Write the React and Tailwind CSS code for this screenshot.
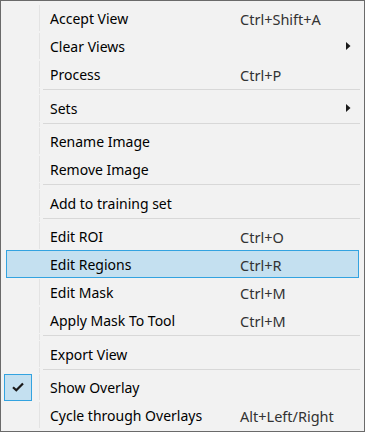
import React from 'react';

const items = [
  { label: 'Accept View', shortcut: 'Ctrl+Shift+A' },
  { label: 'Clear Views', submenu: true },
  { label: 'Process', shortcut: 'Ctrl+P' },
  'sep',
  { label: 'Sets', submenu: true },
  'sep',
  { label: 'Rename Image' },
  { label: 'Remove Image' },
  'sep',
  { label: 'Add to training set' },
  'sep',
  { label: 'Edit ROI', shortcut: 'Ctrl+O' },
  { label: 'Edit Regions', shortcut: 'Ctrl+R', active: true },
  { label: 'Edit Mask', shortcut: 'Ctrl+M' },
  { label: 'Apply Mask To Tool', shortcut: 'Ctrl+M' },
  'sep',
  { label: 'Export View' },
  'sep',
  { label: 'Show Overlay', checked: true },
  { label: 'Cycle through Overlays', shortcut: 'Alt+Left/Right' },
];

function Arrow() {
  return (
    <svg width="5" height="8" viewBox="0 0 5 8" className="block">
      <path d="M0 0 L4.5 4 L0 8 Z" fill="#1a1a1a" />
    </svg>
  );
}

function Separator() {
  return (
    <div className="flex h-[5.5px]">
      <div className="w-[34px] shrink-0 border-r border-[#e3e3e3]" />
      <div className="flex-1 pt-[1px] pl-[3px] -mr-[1px]">
        <div className="h-px bg-[#d8d8d8]" />
      </div>
    </div>
  );
}

function Item({ item }) {
  return (
    <div
      className={`flex items-center h-[28px] border ${
        item.active ? 'bg-[#c4e0f0] border-[#33a3e0]' : 'border-transparent'
      }`}
    >
      <div
        className={`w-[33px] h-full shrink-0 flex items-center border-r ${
          item.active ? 'border-transparent' : 'border-[#e3e3e3]'
        }`}
      >
        {item.checked && (
          <div className="-ml-[3px] w-[28px] h-[27px] bg-[#c4e0f0] border border-[#33a3e0] flex items-center justify-center">
            <svg width="12" height="10" viewBox="0 0 12 10">
              <path d="M1 5.2 L4.3 8.3 L11 1.5" stroke="#1a1a1a" strokeWidth="2.2" fill="none" />
            </svg>
          </div>
        )}
      </div>
      <div className="pl-[10px] pt-[2px] w-[200px] shrink-0 text-black">{item.label}</div>
      <div className="flex-1 pt-[2px] text-[#333] text-[14.5px]">{item.shortcut}</div>
      {item.submenu && (
        <div className="pr-[7px]">
          <Arrow />
        </div>
      )}
    </div>
  );
}

export default function App() {
  return (
    <div className="w-[365px] h-[432px] bg-[#f2f2f2] border border-[#6a6a6a] px-[5px] pt-[3px] font-['Noto_Sans',sans-serif] text-[14px] leading-none">
      {items.map((it, i) =>
        it === 'sep' ? <Separator key={i} /> : <Item key={i} item={it} />
      )}
    </div>
  );
}
